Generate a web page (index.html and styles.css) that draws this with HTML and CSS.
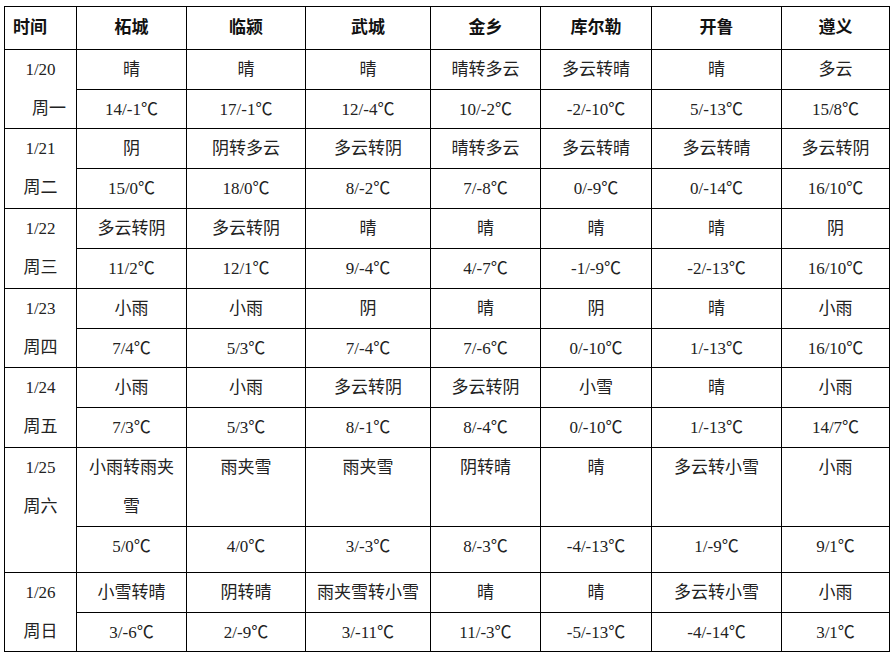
FILE: index.html
```html
<!DOCTYPE html>
<html lang="zh-CN">
<head>
<meta charset="utf-8">
<title>天气预报</title>
<link rel="stylesheet" href="styles.css">
</head>
<body>
<div class="forecast">
  <div class="cell head head-time">时间</div>
  <div class="cell head">柘城</div>
  <div class="cell head">临颍</div>
  <div class="cell head">武城</div>
  <div class="cell head">金乡</div>
  <div class="cell head">库尔勒</div>
  <div class="cell head">开鲁</div>
  <div class="cell head">遵义</div>

  <div class="cell date">1/20<br>　周一</div>
  <div class="cell">晴</div><div class="cell">晴</div><div class="cell">晴</div><div class="cell">晴转多云</div><div class="cell">多云转晴</div><div class="cell">晴</div><div class="cell">多云</div>
  <div class="cell">14/-1℃</div><div class="cell">17/-1℃</div><div class="cell">12/-4℃</div><div class="cell">10/-2℃</div><div class="cell">-2/-10℃</div><div class="cell">5/-13℃</div><div class="cell">15/8℃</div>

  <div class="cell date">1/21<br>周二</div>
  <div class="cell">阴</div><div class="cell">阴转多云</div><div class="cell">多云转阴</div><div class="cell">晴转多云</div><div class="cell">多云转晴</div><div class="cell">多云转晴</div><div class="cell">多云转阴</div>
  <div class="cell">15/0℃</div><div class="cell">18/0℃</div><div class="cell">8/-2℃</div><div class="cell">7/-8℃</div><div class="cell">0/-9℃</div><div class="cell">0/-14℃</div><div class="cell">16/10℃</div>

  <div class="cell date">1/22<br>周三</div>
  <div class="cell">多云转阴</div><div class="cell">多云转阴</div><div class="cell">晴</div><div class="cell">晴</div><div class="cell">晴</div><div class="cell">晴</div><div class="cell">阴</div>
  <div class="cell">11/2℃</div><div class="cell">12/1℃</div><div class="cell">9/-4℃</div><div class="cell">4/-7℃</div><div class="cell">-1/-9℃</div><div class="cell">-2/-13℃</div><div class="cell">16/10℃</div>

  <div class="cell date">1/23<br>周四</div>
  <div class="cell">小雨</div><div class="cell">小雨</div><div class="cell">阴</div><div class="cell">晴</div><div class="cell">阴</div><div class="cell">晴</div><div class="cell">小雨</div>
  <div class="cell">7/4℃</div><div class="cell">5/3℃</div><div class="cell">7/-4℃</div><div class="cell">7/-6℃</div><div class="cell">0/-10℃</div><div class="cell">1/-13℃</div><div class="cell">16/10℃</div>

  <div class="cell date">1/24<br>周五</div>
  <div class="cell">小雨</div><div class="cell">小雨</div><div class="cell">多云转阴</div><div class="cell">多云转阴</div><div class="cell">小雪</div><div class="cell">晴</div><div class="cell">小雨</div>
  <div class="cell">7/3℃</div><div class="cell">5/3℃</div><div class="cell">8/-1℃</div><div class="cell">8/-4℃</div><div class="cell">0/-10℃</div><div class="cell">1/-13℃</div><div class="cell">14/7℃</div>

  <div class="cell date">1/25<br>周六</div>
  <div class="cell">小雨转雨夹雪</div><div class="cell">雨夹雪</div><div class="cell">雨夹雪</div><div class="cell">阴转晴</div><div class="cell">晴</div><div class="cell">多云转小雪</div><div class="cell">小雨</div>
  <div class="cell">5/0℃</div><div class="cell">4/0℃</div><div class="cell">3/-3℃</div><div class="cell">8/-3℃</div><div class="cell">-4/-13℃</div><div class="cell">1/-9℃</div><div class="cell">9/1℃</div>

  <div class="cell date">1/26<br>周日</div>
  <div class="cell">小雪转晴</div><div class="cell">阴转晴</div><div class="cell">雨夹雪转小雪</div><div class="cell">晴</div><div class="cell">晴</div><div class="cell">多云转小雪</div><div class="cell">小雨</div>
  <div class="cell">3/-6℃</div><div class="cell">2/-9℃</div><div class="cell">3/-11℃</div><div class="cell">11/-3℃</div><div class="cell">-5/-13℃</div><div class="cell">-4/-14℃</div><div class="cell">3/1℃</div>
</div>
</body>
</html>
```
FILE: styles.css
```css
html, body {
  background: #fff;
}

body {
  margin: 6px 0 0 4px;
  font-family: "Liberation Serif", "Noto Sans CJK SC", serif;
  font-size: 17px;
  color: #222;
}

.forecast {
  display: grid;
  width: max-content;
  grid-template-columns: 71px 109px 118px 124px 109px 110px 129px 107px;
  grid-template-rows: 42px 39px 38px 39px 39px 39px 39px 39px 38px 39px 39px 78px 45px 39px 38px;
  gap: 1px;
  background: #000;
  border: 1px solid #000;
}

.cell {
  background: #fff;
  padding: 0 7px;
  text-align: center;
  line-height: 39px;
  overflow: hidden;
}

.head {
  line-height: 42px;
  font-weight: bold;
  color: #111;
}

.head-time {
  text-align: left;
  padding-left: 8px;
}

.date {
  grid-row: span 2;
  padding: 0 2px;
}
```
